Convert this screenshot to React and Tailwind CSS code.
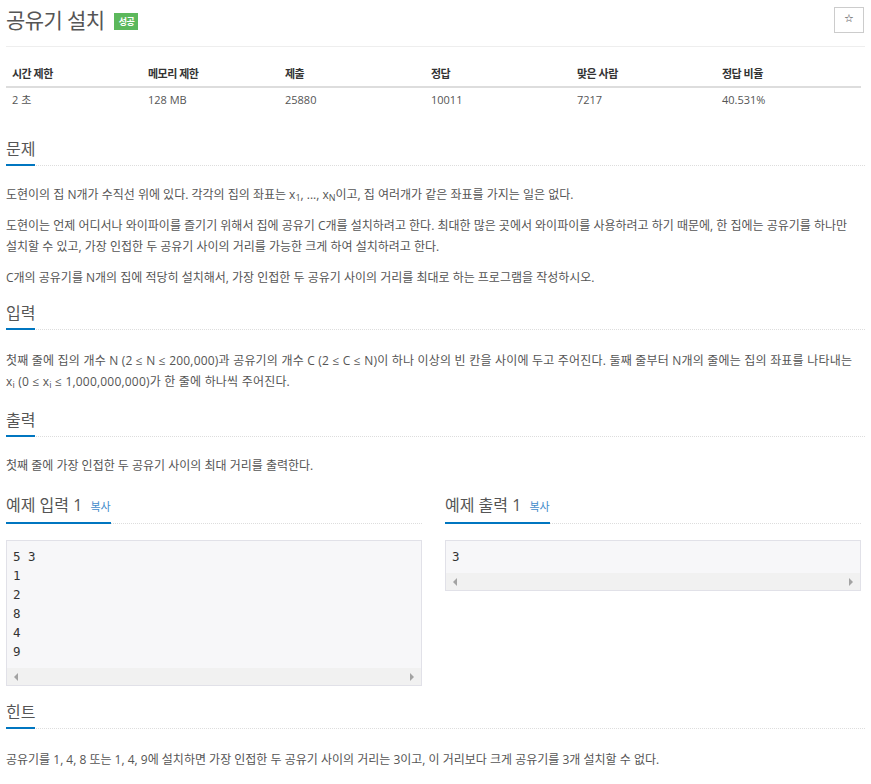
import React from "react";

function Heading({ children }) {
  return (
    <div className="flex border-b border-dotted border-[#ddd]">
      <div className="-mb-px border-b-2 border-[#0076c0] pb-[4px] text-[16px] leading-[22px] text-[#555]">
        {children}
      </div>
    </div>
  );
}

function ScrollBar() {
  return (
    <div className="flex h-[17px] items-center justify-between bg-[#f1f1f1] px-[7px]">
      <div className="h-0 w-0 border-y-[4px] border-r-[4px] border-y-transparent border-r-[#a3a3a3]" />
      <div className="h-0 w-0 border-y-[4px] border-l-[4px] border-y-transparent border-l-[#a3a3a3]" />
    </div>
  );
}

function Sample({ title, lines }) {
  return (
    <div>
      <Heading>
        {title} <span className="ml-[4px] text-[11px] text-[#428bca]">복사</span>
      </Heading>
      <div className="mt-[16px] border border-[#e1e1e8] bg-[#f7f7f9]">
        <pre className="px-[6px] pt-[6px] pb-[7px] font-['DejaVu_Sans_Mono',monospace] text-[12.5px] leading-[19px] text-[#333]">
          {lines.join("\n")}
        </pre>
        <ScrollBar />
      </div>
    </div>
  );
}

export default function App() {
  const cols = [
    ["시간 제한", "2 초", "w-[136px]"],
    ["메모리 제한", "128 MB", "w-[137px]"],
    ["제출", "25880", "w-[146px]"],
    ["정답", "10011", "w-[146px]"],
    ["맞은 사람", "7217", "w-[145px]"],
    ["정답 비율", "40.531%", "w-[145px]"],
  ];
  return (
    <div className="min-h-[784px] bg-white px-[6px] font-['Open_Sans','Noto_Sans_CJK_KR',sans-serif] text-[#555]">
      <div className="flex h-[47px] items-center justify-between border-b border-[#eee] pb-[7px]">
        <div className="flex items-center">
          <span className="text-[21px] leading-[28px] tracking-[-0.6px] text-[#555]">공유기 설치</span>
          <span className="ml-[10px] mt-[3px] flex h-[17px] w-[24px] items-center justify-center bg-[#5cb85c] text-[9px] font-bold leading-none tracking-[-0.5px] text-white">
            성공
          </span>
        </div>
        <button className="mr-px flex h-[26px] w-[30px] items-center justify-center border border-[#ccc] bg-white font-['DejaVu_Sans',sans-serif] text-[11px] text-[#333]">
          ☆
        </button>
      </div>

      <table className="mt-[15px] table-fixed border-collapse text-[11px]">
        <thead>
          <tr className="border-b-2 border-[#ddd]">
            {cols.map((c) => (
              <th key={c[0]} className={`${c[2]} h-[25px] px-[6px] text-left font-bold tracking-[-0.5px] text-[#333]`}>
                {c[0]}
              </th>
            ))}
          </tr>
        </thead>
        <tbody>
          <tr>
            {cols.map((c) => (
              <td key={c[0]} className="h-[25px] px-[6px] text-[#555]">
                {c[1]}
              </td>
            ))}
          </tr>
        </tbody>
      </table>

      <section className="mt-[26px]">
        <Heading>문제</Heading>
        <div className="mt-[18px] space-y-[10px] text-[12px] leading-[21px]">
          <p>
            도현이의 집 N개가 수직선 위에 있다. 각각의 집의 좌표는 x<sub>1</sub>, ..., x<sub>N</sub>이고, 집 여러개가 같은 좌표를 가지는 일은 없다.
          </p>
          <p>
            도현이는 언제 어디서나 와이파이를 즐기기 위해서 집에 공유기 C개를 설치하려고 한다. 최대한 많은 곳에서 와이파이를 사용하려고 하기 때문에, 한 집에는 공유기를 하나만
            <br />
            설치할 수 있고, 가장 인접한 두 공유기 사이의 거리를 가능한 크게 하여 설치하려고 한다.
          </p>
          <p>C개의 공유기를 N개의 집에 적당히 설치해서, 가장 인접한 두 공유기 사이의 거리를 최대로 하는 프로그램을 작성하시오.</p>
        </div>
      </section>

      <section className="mt-[14px]">
        <Heading>입력</Heading>
        <div className="mt-[20px] text-[12px] leading-[21px]">
          <p className="whitespace-nowrap tracking-[0.2px]">
            첫째 줄에 집의 개수 N (2 ≤ N ≤ 200,000)과 공유기의 개수 C (2 ≤ C ≤ N)이 하나 이상의 빈 칸을 사이에 두고 주어진다. 둘째 줄부터 N개의 줄에는 집의 좌표를 나타내는
            <br />
            x<sub>i</sub> (0 ≤ x<sub>i</sub> ≤ 1,000,000,000)가 한 줄에 하나씩 주어진다.
          </p>
        </div>
      </section>

      <section className="mt-[17px]">
        <Heading>출력</Heading>
        <div className="mt-[18px] text-[12px] leading-[21px]">
          <p>첫째 줄에 가장 인접한 두 공유기 사이의 최대 거리를 출력한다.</p>
        </div>
      </section>

      <div className="mt-[18px] grid grid-cols-[416px_416px] items-start gap-x-[23px]">
        <Sample title="예제 입력 1" lines={["5 3", "1", "2", "8", "4", "9"]} />
        <Sample title="예제 출력 1" lines={["3"]} />
      </div>

      <section className="mt-[15px] pb-[16px]">
        <Heading>힌트</Heading>
        <div className="mt-[20px] text-[12px] leading-[21px]">
          <p>공유기를 1, 4, 8 또는 1, 4, 9에 설치하면 가장 인접한 두 공유기 사이의 거리는 3이고, 이 거리보다 크게 공유기를 3개 설치할 수 없다.</p>
        </div>
      </section>
    </div>
  );
}
